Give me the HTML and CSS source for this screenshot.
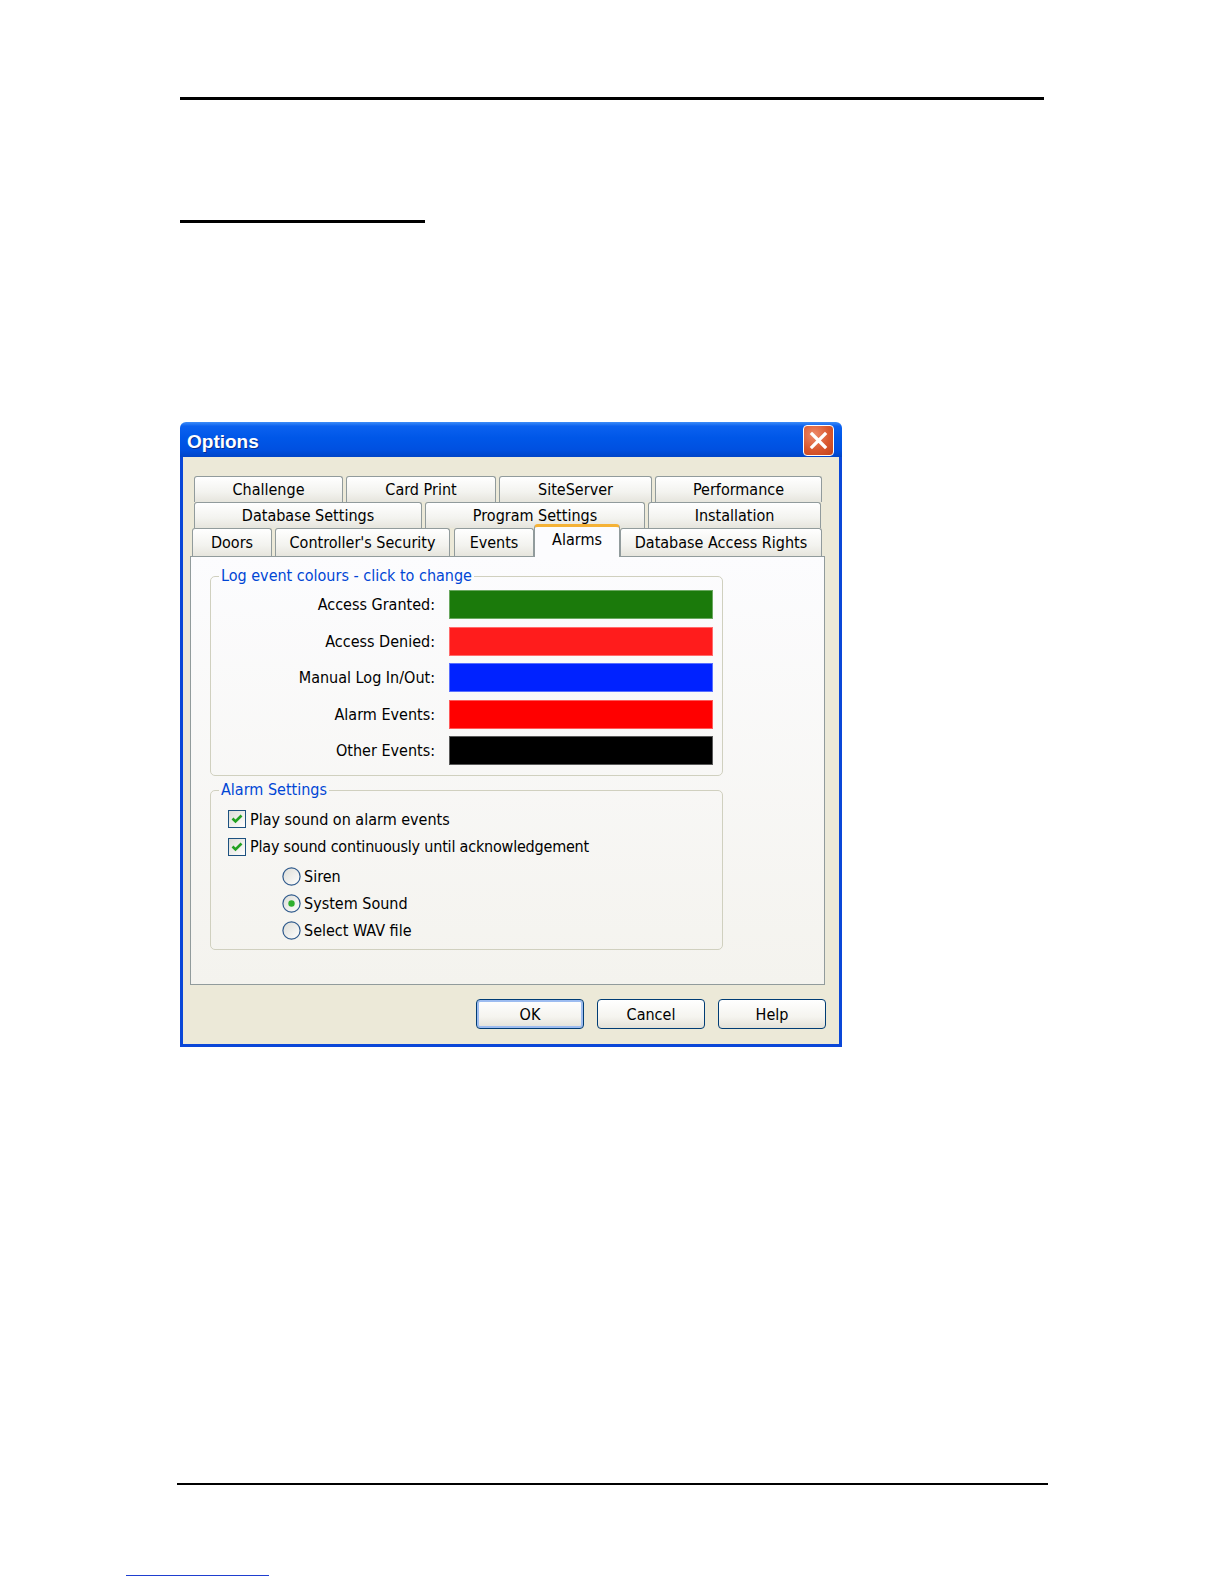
FILE: index.html
```html
<!DOCTYPE html>
<html>
<head>
  <title>Options</title>
  <link rel="stylesheet" href="styles.css">
</head>
<body>
<div class="page">
  <div class="header-rule"></div>
  <div class="heading-rule"></div>

  <div class="dialog">
    <div class="titlebar">
      <span class="title">Options</span>
      <span class="close">
        <svg width="21" height="21" viewBox="0 0 21 21"><path d="M4 4 L17 17 M17 4 L4 17" stroke="#fff" stroke-width="3.2" stroke-linecap="square"/></svg>
      </span>
    </div>

    <div class="dialog-body">
      <div class="tabs">
        <div class="tab-row row1">
          <div class="tab">Challenge</div>
          <div class="tab">Card Print</div>
          <div class="tab">SiteServer</div>
          <div class="tab">Performance</div>
        </div>
        <div class="tab-row row2">
          <div class="tab">Database Settings</div>
          <div class="tab">Program Settings</div>
          <div class="tab">Installation</div>
        </div>
        <div class="tab-row row3">
          <div class="tab doors">Doors</div>
          <div class="tab security">Controller's Security</div>
          <div class="tab events">Events</div>
          <div class="tab alarms selected">Alarms</div>
          <div class="tab rights">Database Access Rights</div>
        </div>
      </div>

      <div class="panel">
        <fieldset class="group colours">
          <legend>Log event colours - click to change</legend>
          <div class="colour-row"><span class="colour-label">Access Granted:</span><span class="swatch granted"></span></div>
          <div class="colour-row"><span class="colour-label">Access Denied:</span><span class="swatch denied"></span></div>
          <div class="colour-row"><span class="colour-label">Manual Log In/Out:</span><span class="swatch manual"></span></div>
          <div class="colour-row"><span class="colour-label">Alarm Events:</span><span class="swatch alarm"></span></div>
          <div class="colour-row"><span class="colour-label">Other Events:</span><span class="swatch other"></span></div>
        </fieldset>

        <fieldset class="group alarm-settings">
          <legend>Alarm Settings</legend>
          <div class="check-row">
            <svg class="box" width="18" height="18" viewBox="0 0 18 18">
              <defs><linearGradient id="cb" x1="0" y1="0" x2="1" y2="1"><stop offset="0" stop-color="#dcdcd6"/><stop offset="1" stop-color="#ffffff"/></linearGradient></defs>
              <rect x="0.5" y="0.5" width="17" height="17" fill="url(#cb)" stroke="#1c5180"/>
              <path d="M4.5 8.5 L7.5 11.5 L13.5 5.5" fill="none" stroke="#21a121" stroke-width="2.6"/>
            </svg>
            <span>Play sound on alarm events</span>
          </div>
          <div class="check-row">
            <svg class="box" width="18" height="18" viewBox="0 0 18 18">
              <rect x="0.5" y="0.5" width="17" height="17" fill="url(#cb)" stroke="#1c5180"/>
              <path d="M4.5 8.5 L7.5 11.5 L13.5 5.5" fill="none" stroke="#21a121" stroke-width="2.6"/>
            </svg>
            <span class="long">Play sound continuously until acknowledgement</span>
          </div>
          <div class="radio-row first">
            <svg class="radio" width="19" height="19" viewBox="0 0 19 19">
              <defs><linearGradient id="rb" x1="0" y1="0" x2="1" y2="1"><stop offset="0" stop-color="#dcdcd6"/><stop offset="1" stop-color="#ffffff"/></linearGradient></defs>
              <circle cx="9.5" cy="9.5" r="8.6" fill="url(#rb)" stroke="#2f5a8c" stroke-width="1.2"/>
            </svg>
            <span>Siren</span>
          </div>
          <div class="radio-row">
            <svg class="radio" width="19" height="19" viewBox="0 0 19 19">
              <circle cx="9.5" cy="9.5" r="8.6" fill="url(#rb)" stroke="#2f5a8c" stroke-width="1.2"/>
              <circle cx="9.5" cy="9.5" r="3.2" fill="#2fb02f"/>
            </svg>
            <span>System Sound</span>
          </div>
          <div class="radio-row">
            <svg class="radio" width="19" height="19" viewBox="0 0 19 19">
              <circle cx="9.5" cy="9.5" r="8.6" fill="url(#rb)" stroke="#2f5a8c" stroke-width="1.2"/>
            </svg>
            <span>Select WAV file</span>
          </div>
        </fieldset>
      </div>

      <div class="buttons">
        <button class="btn default">OK</button>
        <button class="btn">Cancel</button>
        <button class="btn">Help</button>
      </div>
    </div>
  </div>

  <div class="footer-rule"></div>
  <div class="link-rule"></div>
</div>
</body>
</html>
```

FILE: styles.css
```css
body {
  margin: 0;
  background: #fff;
  font-family: "DejaVu Sans Condensed", "DejaVu Sans", "Liberation Sans", sans-serif;
  font-size: 16px;
  color: #000;
}

.page {
  padding-left: 180px;
  padding-top: 97px;
}

.header-rule {
  width: 864px;
  height: 3px;
  background: #000;
}

.heading-rule {
  width: 245px;
  height: 3px;
  background: #000;
  margin-top: 120px;
}

/* dialog window */
.dialog {
  width: 662px;
  margin-top: 199px;
}

.titlebar {
  height: 35px;
  display: flex;
  align-items: center;
  justify-content: space-between;
  padding: 0 8px 0 7px;
  border-radius: 6px 6px 0 0;
  background: linear-gradient(#3d8df8 0, #0b61ef 12%, #0057e8 45%, #0050e0 80%, #0045c8 100%);
}

.title {
  font-family: "Liberation Sans", sans-serif;
  font-weight: bold;
  font-size: 19px;
  color: #fff;
  text-shadow: 1px 1px 0 #0a2f8f;
  padding-top: 5px;
}

.close {
  width: 29px;
  height: 29px;
  margin-top: 2px;
  border: 1px solid #fff;
  border-radius: 4px;
  background: radial-gradient(circle at 35% 30%, #ee8a6a 0, #d9582f 55%, #c3431c 100%);
  display: flex;
  align-items: center;
  justify-content: center;
}

.dialog-body {
  background: #ece9d8;
  border: 3px solid #0a47d8;
  border-top: 0;
  padding: 19px 14px 15px 7px;
}

/* tabs */
.tab-row {
  display: flex;
  height: 26px;
}

.row1, .row2 {
  margin-left: 4px;
  gap: 3px;
}

.row3 {
  margin-left: 2px;
  height: 28px;
  align-items: flex-end;
}

.tab {
  height: 100%;
  box-sizing: border-box;
  border: 1px solid #919b9c;
  border-bottom: 0;
  border-radius: 3px 3px 0 0;
  background: linear-gradient(#ffffff, #f3f3ef 60%, #e6e5dd);
  display: flex;
  align-items: center;
  justify-content: center;
  color: #000;
}

.row1 .tab:nth-child(1) { width: 149px; }
.row1 .tab:nth-child(2) { width: 150px; }
.row1 .tab:nth-child(3) { width: 153px; }
.row1 .tab:nth-child(4) { width: 167px; }

.row2 .tab:nth-child(1) { width: 228px; }
.row2 .tab:nth-child(2) { width: 220px; }
.row2 .tab:nth-child(3) { width: 173px; }

.doors { width: 80px; }
.security { width: 175px; margin-left: 3px; }
.events { width: 80px; margin-left: 4px; }
.alarms { width: 86px; }
.rights { width: 202px; }

.tab.selected {
  height: 33px;
  margin-bottom: -1px;
  position: relative;
  z-index: 1;
  background: #fcfcfe;
  border-top: 3px solid #f5b236;
  border-radius: 4px 4px 0 0;
  padding-bottom: 5px;
}

/* tab page */
.panel {
  height: 429px;
  box-sizing: border-box;
  border: 1px solid #919b9c;
  background: linear-gradient(#fcfcfe, #f4f3ee);
  padding: 10px 0 0 19px;
}

.group {
  width: 513px;
  box-sizing: border-box;
  margin: 0;
  border: 1px solid #d0d0bf;
  border-radius: 5px;
  padding: 0;
}

.group legend {
  color: #0046d5;
  margin-left: 8px;
  padding: 0 2px;
  line-height: 18px;
}

.colours {
  padding: 5px 0 10px 0;
}

.colour-row {
  display: flex;
  align-items: center;
  height: 29px;
  margin-bottom: 7.5px;
}

.colour-row:last-child {
  margin-bottom: 0;
}

.colour-label {
  width: 224px;
  text-align: right;
  margin-right: 14px;
}

.swatch {
  width: 264px;
  height: 29px;
  box-sizing: border-box;
  border: 1px solid rgba(255, 255, 255, 0.35);
}

.granted { background: #1b7a0b; }
.denied { background: #ff1c1c; }
.manual { background: #0022ff; }
.alarm { background: #ff0000; }
.other { background: #000000; }

.alarm-settings {
  margin-top: 5px;
  padding: 6.5px 0 5px 0;
}

.check-row, .radio-row {
  display: flex;
  align-items: center;
}

.check-row {
  height: 27.5px;
  padding-left: 17px;
  gap: 4px;
}

.long {
  letter-spacing: -0.2px;
}

.radio-row {
  height: 27px;
  padding-left: 71px;
  gap: 3px;
}

.radio-row.first {
  margin-top: 2px;
}

/* buttons */
.buttons {
  display: flex;
  justify-content: flex-end;
  gap: 13px;
  margin-top: 14px;
  margin-right: -1px;
}

.btn {
  width: 108px;
  height: 30px;
  font-family: inherit;
  font-size: 16px;
  color: #000;
  border: 1px solid #003c74;
  border-radius: 4px;
  background: linear-gradient(#ffffff, #f5f4ef 60%, #e3e1d8);
  padding: 0;
}

.btn.default {
  box-shadow: inset 0 0 0 2px #9dbcf0;
}

/* footer */
.footer-rule {
  width: 871px;
  height: 2px;
  background: #000;
  margin-top: 436px;
  margin-left: -3px;
}

.link-rule {
  width: 143px;
  height: 1px;
  background: #1f3fd0;
  margin-top: 90px;
  margin-left: -54px;
}
```
